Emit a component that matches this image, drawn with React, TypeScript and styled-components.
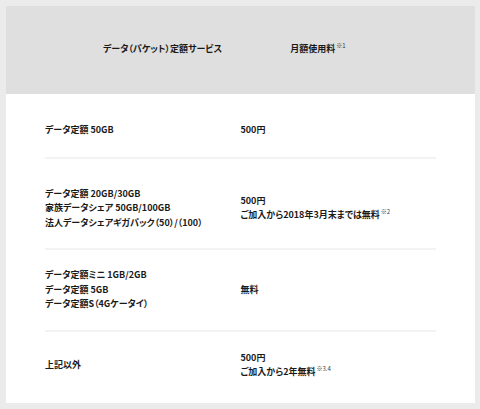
import type { ReactNode } from "react";
import { createGlobalStyle, styled } from "styled-components";

const GlobalStyle = createGlobalStyle`
  html, body {
    margin: 0;
    padding: 0;
    background: #ebebeb;
  }
  body {
    font-family: "Noto Sans CJK JP", "Noto Sans", sans-serif;
    font-weight: 700;
    font-size: 9px;
    color: #1a1a1a;
    font-feature-settings: "palt";
  }
`;

const Page = styled.div`
  padding: 6px 5px 6px 6px;
  width: 480px;
  height: 409px;
  box-sizing: border-box;
`;

const Card = styled.div`
  background: #fff;
  width: 469px;
  display: flex;
  flex-direction: column;
`;

const Head = styled.div`
  background: #dfdfdf;
  height: 88px;
  box-sizing: border-box;
  padding-bottom: 4px;
  display: grid;
  grid-template-columns: 235px 76px;
  align-items: center;
  padding-left: 39px;
`;

const HeadCell = styled.div`
  text-align: center;
  white-space: nowrap;
  justify-self: center;
`;

const Body = styled.div`
  padding: 0 39px;
`;

const BodyRow = styled.div<{ $top: number; $bottom: number; $last: boolean }>`
  display: grid;
  grid-template-columns: 1fr 1fr;
  align-items: center;
  padding-top: ${(p) => p.$top}px;
  padding-bottom: ${(p) => p.$bottom}px;
  border-bottom: ${(p) => (p.$last ? "none" : "2px solid #f3f3f3")};
`;

const Cell = styled.div`
  display: flex;
  flex-direction: column;
`;

const Line = styled.div`
  line-height: 14.5px;
  white-space: nowrap;
`;

const Note = styled.sup`
  font-size: 6px;
  font-weight: 400;
  color: #333;
  vertical-align: 4px;
  line-height: 0;
  margin-left: 1px;
`;

type Row = {
  service: string[];
  price: ReactNode[];
  padTop: number;
  padBottom: number;
};

const rows: Row[] = [
  {
    service: ["データ定額 50GB"],
    price: ["500円"],
    padTop: 29,
    padBottom: 19,
  },
  {
    service: [
      "データ定額 20GB/30GB",
      "家族データシェア 50GB/100GB",
      "法人データシェアギガパック（50）/（100）",
    ],
    price: [
      "500円",
      <>
        ご加入から2018年3月末までは無料<Note>※2</Note>
      </>,
    ],
    padTop: 28,
    padBottom: 18,
  },
  {
    service: ["データ定額ミニ 1GB/2GB", "データ定額 5GB", "データ定額S（4Gケータイ）"],
    price: ["無料"],
    padTop: 18,
    padBottom: 18,
  },
  {
    service: ["上記以外"],
    price: [
      "500円",
      <>
        ご加入から2年無料<Note>※3.4</Note>
      </>,
    ],
    padTop: 19,
    padBottom: 23,
  },
];

const App = () => {
  return (
    <Page>
      <GlobalStyle />
      <Card>
        <Head>
          <HeadCell>データ（パケット）定額サービス</HeadCell>
          <HeadCell>
            月額使用料<Note>※1</Note>
          </HeadCell>
        </Head>
        <Body>
          {rows.map((row, i) => (
            <BodyRow key={i} $top={row.padTop} $bottom={row.padBottom} $last={i === rows.length - 1}>
              <Cell>
                {row.service.map((s, j) => (
                  <Line key={j}>{s}</Line>
                ))}
              </Cell>
              <Cell>
                {row.price.map((p, j) => (
                  <Line key={j}>{p}</Line>
                ))}
              </Cell>
            </BodyRow>
          ))}
        </Body>
      </Card>
    </Page>
  );
};

export default App;
